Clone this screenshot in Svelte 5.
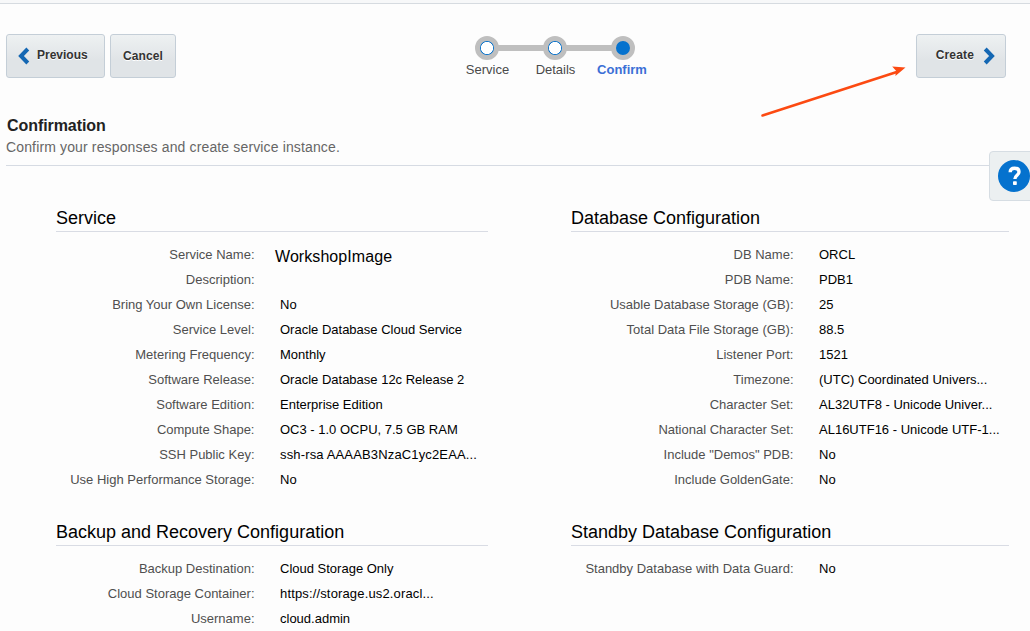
<script>
  const steps = [
    { label: 'Service', current: false },
    { label: 'Details', current: false },
    { label: 'Confirm', current: true }
  ];

  const columns = [
    [
      {
        title: 'Service',
        rows: [
          { label: 'Service Name', value: 'WorkshopImage', large: true },
          { label: 'Description', value: '' },
          { label: 'Bring Your Own License', value: 'No' },
          { label: 'Service Level', value: 'Oracle Database Cloud Service' },
          { label: 'Metering Frequency', value: 'Monthly' },
          { label: 'Software Release', value: 'Oracle Database 12c Release 2' },
          { label: 'Software Edition', value: 'Enterprise Edition' },
          { label: 'Compute Shape', value: 'OC3 - 1.0 OCPU, 7.5 GB RAM' },
          { label: 'SSH Public Key', value: 'ssh-rsa AAAAB3NzaC1yc2EAA...', loose: true },
          { label: 'Use High Performance Storage', value: 'No' }
        ]
      },
      {
        title: 'Backup and Recovery Configuration',
        rows: [
          { label: 'Backup Destination', value: 'Cloud Storage Only' },
          { label: 'Cloud Storage Container', value: 'https://storage.us2.oracl...', loose: true },
          { label: 'Username', value: 'cloud.admin' }
        ]
      }
    ],
    [
      {
        title: 'Database Configuration',
        rows: [
          { label: 'DB Name', value: 'ORCL' },
          { label: 'PDB Name', value: 'PDB1' },
          { label: 'Usable Database Storage (GB)', value: '25' },
          { label: 'Total Data File Storage (GB)', value: '88.5' },
          { label: 'Listener Port', value: '1521' },
          { label: 'Timezone', value: '(UTC) Coordinated Univers...' },
          { label: 'Character Set', value: 'AL32UTF8 - Unicode Univer...' },
          { label: 'National Character Set', value: 'AL16UTF16 - Unicode UTF-1...' },
          { label: 'Include "Demos" PDB', value: 'No' },
          { label: 'Include GoldenGate', value: 'No' }
        ]
      },
      {
        title: 'Standby Database Configuration',
        rows: [{ label: 'Standby Database with Data Guard', value: 'No' }]
      }
    ]
  ];
</script>

<div class="page">
  <div class="strip"></div>

  <header class="toolbar">
    <div class="group">
      <button class="btn previous">
        <svg class="chevron" width="12" height="18" viewBox="0 0 12 18">
          <path d="M9.8 2 L3 9 L9.8 16" />
        </svg>
        <span>Previous</span>
      </button>
      <button class="btn cancel">Cancel</button>
    </div>

    <ol class="train">
      {#each steps as step}
        <li class:current={step.current}>
          <i class="dot"></i>
          <span>{step.label}</span>
        </li>
      {/each}
    </ol>

    <button class="btn create">
      <span>Create</span>
      <svg class="chevron" width="12" height="18" viewBox="0 0 12 18">
        <path d="M2.2 2 L9 9 L2.2 16" />
      </svg>
    </button>
  </header>

  <div class="intro">
    <h1>Confirmation</h1>
    <p>Confirm your responses and create service instance.</p>
  </div>

  <main class="columns">
    {#each columns as sections}
      <div class="column">
        {#each sections as section}
          <section>
            <h2>{section.title}</h2>
            <dl>
              {#each section.rows as row}
                <div class="row">
                  <dt>{row.label}:</dt>
                  <dd class:large={row.large} class:loose={row.loose}>{row.value}</dd>
                </div>
              {/each}
            </dl>
          </section>
        {/each}
      </div>
    {/each}
  </main>

  <svg class="pointer" width="150" height="56" viewBox="0 0 150 56">
    <path d="M6.5 50.5 L140 7.2" stroke="#fc4a12" stroke-width="2.5" stroke-linecap="round" />
    <path d="M149.5 2.5 L136.2 1.4 L140 5.8 L139.4 11 Z" fill="#fc4a12" />
  </svg>

  <button class="help" aria-label="Help">
    <svg width="32" height="32" viewBox="0 0 32 32">
      <circle cx="16" cy="16" r="16" fill="#0572ce" />
      <path d="M12.2 12.2 C12.2 9.4 14 8.2 16.6 8.2 C19.2 8.2 21 9.6 21 11.9 C21 15.2 16.9 15.2 16.9 18.9" fill="none" stroke="#fff" stroke-width="3.4" />
      <rect x="15" y="21.2" width="3.8" height="3.8" rx="0.8" fill="#fff" />
    </svg>
  </button>
</div>

<style>
  :global(body) {
    background: #fdfdfd;
  }
  .page {
    position: relative;
    box-sizing: border-box;
    width: 1030px;
    height: 631px;
    overflow: hidden;
    font-family: 'Liberation Sans', Arial, sans-serif;
    font-size: 13px;
    color: #000;
    background: #fdfdfd;
  }
  .strip {
    height: 3px;
    background: #f7f8f9;
    border-bottom: 1px solid #d6dbe0;
  }
  .toolbar {
    display: grid;
    grid-template-columns: 447px 204px 1fr;
    align-items: start;
    padding: 30px 24px 0 6px;
    height: 44px;
  }
  .group {
    display: flex;
    gap: 5px;
  }
  .btn {
    box-sizing: border-box;
    display: flex;
    align-items: center;
    height: 44px;
    padding: 0;
    border: 1px solid #c4ced7;
    border-radius: 3px;
    background: linear-gradient(#eef1f2, #e0e4e7 60%, #e0e4e7);
    font: bold 12px/16px 'Liberation Sans', Arial, sans-serif;
    color: #333;
    text-shadow: 0 1px 0 #fff;
  }
  .btn span {
    padding-bottom: 2px;
  }
  .previous {
    width: 99px;
    padding-left: 11px;
    gap: 7px;
  }
  .cancel {
    width: 66px;
    justify-content: center;
    letter-spacing: 0.1px;
  }
  .create {
    width: 90px;
    justify-self: end;
    justify-content: flex-end;
    padding-right: 10px;
    gap: 9px;
    letter-spacing: 0.15px;
  }
  .chevron path {
    fill: none;
    stroke: #1467b3;
    stroke-width: 4;
  }
  .train {
    display: flex;
    margin: 2px 0 0;
    padding: 0;
    list-style: none;
    color: #4a4a4a;
  }
  .train li {
    position: relative;
    display: flex;
    flex-direction: column;
    align-items: center;
    width: 68px;
    line-height: 15px;
  }
  .train li + li::before {
    content: '';
    position: absolute;
    top: 9px;
    left: -24px;
    width: 48px;
    height: 6px;
    background: #bfbfbf;
  }
  .dot {
    box-sizing: border-box;
    width: 24px;
    height: 24px;
    margin-bottom: 2px;
    border: 5px solid #bfbfbf;
    border-radius: 50%;
    background: radial-gradient(circle, #fff 5.8px, #0572ce 6.4px);
  }
  .current .dot {
    background: #0572ce;
  }
  .train span {
    margin-right: -1px;
  }
  .train .current span {
    margin-right: 2px;
    font-weight: bold;
    color: #3b6fd6;
  }
  .intro {
    margin: 38px 24px 0 6px;
    height: 49px;
    border-bottom: 1px solid #d6dbe3;
  }
  h1 {
    margin: 0;
    padding-left: 1px;
    font-size: 16px;
    line-height: 20px;
    letter-spacing: -0.07px;
    color: #222;
  }
  p {
    margin: 0;
    padding-top: 1px;
    font-size: 14px;
    line-height: 20px;
    letter-spacing: 0.14px;
    color: #666;
  }
  .columns {
    display: grid;
    grid-template-columns: 432px 438px;
    column-gap: 83px;
    padding: 41px 0 0 56px;
  }
  section {
    margin-bottom: 29px;
  }
  h2 {
    margin: 0;
    height: 24px;
    border-bottom: 1px solid #d9dce4;
    font-size: 18px;
    font-weight: normal;
    line-height: 23px;
  }
  dl {
    margin: 0;
    padding-top: 10px;
  }
  .row {
    display: grid;
    grid-template-columns: 198.5px 1fr;
    column-gap: 25.5px;
    height: 25px;
    line-height: 25px;
    white-space: nowrap;
  }
  .column + .column .row {
    grid-template-columns: 222.5px 1fr;
  }
  dt {
    text-align: right;
    color: #4f4f4f;
  }
  dd {
    margin: 0;
  }
  dd.large {
    margin-left: -5px;
    font-size: 16px;
    line-height: 30px;
    letter-spacing: 0.07px;
  }
  dd.loose {
    letter-spacing: 0.15px;
  }
  .pointer {
    position: absolute;
    left: 756px;
    top: 65px;
    fill: none;
  }
  .help {
    position: absolute;
    left: 989px;
    top: 151px;
    box-sizing: border-box;
    width: 50px;
    height: 50px;
    padding: 8px;
    border: 1px solid #d6dde3;
    border-radius: 4px;
    background: #ecf0f1;
  }
  .help svg {
    display: block;
  }
</style>
